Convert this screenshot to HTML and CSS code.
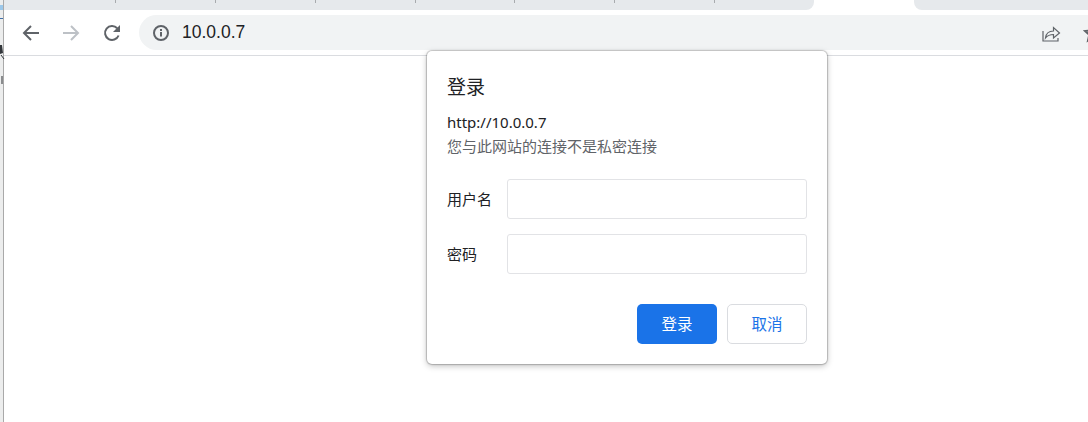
FILE: index.html
```html
<!DOCTYPE html>
<html lang="zh-CN">
<head>
    <meta charset="UTF-8">
    <meta name="viewport" content="width=device-width, initial-scale=1.0">
    <title>登录</title>
    <link rel="stylesheet" href="styles.css">
</head>
<body>
    <div class="side-strip">
        <svg class="side-marks" viewBox="0 0 5 100">
            <path d="M0 5h3v5H0z" fill="#9cc8ea"/>
            <path d="M0 18h3v1H0z" fill="#3f6fa8"/>
            <path d="M0 45h2l1 8-3 1z" fill="#33373b"/>
            <path d="M1 55l3 4" stroke="#33373b" stroke-width="1"/>
            <path d="M1 76h2v8H1z" fill="#8a8c8e"/>
        </svg>
    </div>
    <div class="browser">
        <div class="tab-strip">
            <div class="tabs-left">
                <span class="tab-tick"></span>
                <span class="tab-tick"></span>
                <span class="tab-tick"></span>
                <span class="tab-tick"></span>
                <span class="tab-tick"></span>
                <span class="tab-tick"></span>
                <span class="tab-tick"></span>
            </div>
            <div class="tab-active"></div>
            <div class="tabs-right"></div>
        </div>
        <div class="toolbar">
            <svg class="nav-icon" viewBox="0 0 20 20"><path d="M18 10H3.500M10 3l-7 7 7 7" fill="none" stroke="#5f6368" stroke-width="2"/></svg>
            <svg class="nav-icon" viewBox="0 0 20 20"><path d="M2 10h14.500M10 3l7 7-7 7" fill="none" stroke="#bdc1c6" stroke-width="2"/></svg>
            <svg class="nav-icon" viewBox="0 0 20 20"><path d="M17.600 12.500A7 7 0 1 1 16.200 5.200" fill="none" stroke="#5f6368" stroke-width="2"/><path d="M19 2v7h-7z" fill="#5f6368"/></svg>
            <div class="address-bar">
                <svg class="info-icon" viewBox="0 0 16 16"><circle cx="8" cy="8" r="7" fill="none" stroke="#5f6368" stroke-width="2"/><path d="M7 7h2v4.500H7zM7 4h2v2H7z" fill="#5f6368"/></svg>
                <span class="url">10.0.0.7</span>
                <svg class="share-icon" viewBox="0 0 20 20"><path d="M2 8v10h15v-3" fill="none" stroke="#5f6368" stroke-width="1.200"/><path d="M4.500 15c.5-4.500 3.500-7 8-7V4.500l6 5.500-6 5v-3.500c-3.500 0-6 1-8 3.500z" fill="none" stroke="#5f6368" stroke-width="1.200"/></svg>
                <svg class="star-icon" viewBox="0 0 20 20"><path d="M10 2l2.400 5.400 5.600.6-4.200 3.800 1.200 5.700-5-2.900-5 2.900 1.200-5.700L2 8l5.600-.6z" fill="none" stroke="#5f6368" stroke-width="2"/></svg>
            </div>
        </div>
        <div class="page"></div>
    </div>

    <form class="dialog">
        <h1 class="dialog-title">登录</h1>
        <div class="dialog-origin">http://10.0.0.7</div>
        <div class="dialog-note">您与此网站的连接不是私密连接</div>
        <div class="form-group">
            <label for="username">用户名</label>
            <input type="text" id="username">
        </div>
        <div class="form-group">
            <label for="password">密码</label>
            <input type="password" id="password">
        </div>
        <div class="dialog-buttons">
            <button type="submit" class="btn-primary">登录</button>
            <button type="button" class="btn-cancel">取消</button>
        </div>
    </form>
</body>
</html>
```

FILE: styles.css
```css
html, body {
    height: 100%;
}
body {
    margin: 0;
    display: flex;
    overflow: hidden;
    background-color: white;
    font-family: "Noto Sans CJK SC", "Liberation Sans", sans-serif;
}
.side-strip {
    position: relative;
    width: 3px;
    flex-shrink: 0;
    background-color: #eceded;
    border-right: 1px solid #a9a9a9;
}
.side-marks {
    position: absolute;
    left: 0;
    top: 0;
    width: 5px;
    height: 100px;
}
.browser {
    flex: 1;
    min-width: 0;
    display: flex;
    flex-direction: column;
}
.tab-strip {
    display: flex;
    height: 10px;
    flex-shrink: 0;
}
.tabs-left {
    width: 810px;
    background-color: #e6e9ec;
    border-bottom-right-radius: 8px;
    display: flex;
    align-items: flex-start;
    padding-left: 111px;
    box-sizing: border-box;
}
.tab-tick {
    width: 1px;
    height: 3px;
    margin-right: 99px;
    background-color: #a8abae;
}
.tab-active {
    width: 100px;
}
.tabs-right {
    flex: 1;
    background-color: #e6e9ec;
    border-bottom-left-radius: 8px;
}
.toolbar {
    display: flex;
    align-items: center;
    height: 46px;
    flex-shrink: 0;
    box-sizing: border-box;
    padding: 5px 0 5px 17px;
    border-bottom: 1px solid #dadce0;
}
.nav-icon {
    width: 20px;
    height: 20px;
    margin-right: 20px;
    flex-shrink: 0;
}
.address-bar {
    flex: 1;
    min-width: 0;
    height: 35px;
    margin-left: -2px;
    display: flex;
    align-items: center;
    padding-left: 14px;
    background-color: #f1f3f4;
    border-radius: 18px 0 0 18px;
}
.info-icon {
    width: 16px;
    height: 16px;
    margin-right: 13px;
}
.url {
    flex: 1;
    font-family: "Liberation Sans", Arial, sans-serif;
    font-size: 17.500px;
    color: #202124;
}
.share-icon {
    width: 20px;
    height: 20px;
    margin-right: 22px;
    flex-shrink: 0;
}
.star-icon {
    width: 20px;
    height: 20px;
    margin-right: -15px;
    flex-shrink: 0;
}
.page {
    flex: 1;
}
.dialog {
    position: absolute;
    left: 427px;
    top: 51px;
    width: 400px;
    height: 313px;
    box-sizing: border-box;
    padding: 20px;
    background-color: white;
    border-radius: 5px;
    box-shadow: 0 0 1px 1px rgba(0,0,0,0.2), 0 2px 6px rgba(0,0,0,0.25);
}
.dialog-title {
    margin: 2px 0 0;
    font-size: 19px;
    font-weight: normal;
    line-height: 26px;
    color: #202124;
}
.dialog-origin {
    margin-top: 13px;
    font-family: "Noto Sans", "Liberation Sans", sans-serif;
    font-size: 15px;
    line-height: 20px;
    color: #202124;
}
.dialog-note {
    margin-top: 4px;
    font-size: 15px;
    line-height: 20px;
    color: #5f6368;
}
.form-group {
    display: flex;
    align-items: center;
    margin-top: 15px;
}
.dialog-note + .form-group {
    margin-top: 23px;
}
label {
    width: 60px;
    flex-shrink: 0;
    margin-bottom: 2px;
    font-size: 15px;
    color: #202124;
}
input {
    width: 300px;
    height: 40px;
    box-sizing: border-box;
    border: 1px solid #e2e3e6;
    border-radius: 3px;
    outline: none;
}
.dialog-buttons {
    display: flex;
    justify-content: flex-end;
    gap: 10px;
    margin-top: 30px;
}
button {
    width: 80px;
    height: 40px;
    padding: 0 0 2px;
    border-radius: 5px;
    font-family: inherit;
    font-size: 15.500px;
    cursor: pointer;
}
.btn-primary {
    background-color: #1a73e8;
    color: white;
    border: none;
}
.btn-cancel {
    background-color: white;
    color: #1a73e8;
    border: 1px solid #dadce0;
}
```
